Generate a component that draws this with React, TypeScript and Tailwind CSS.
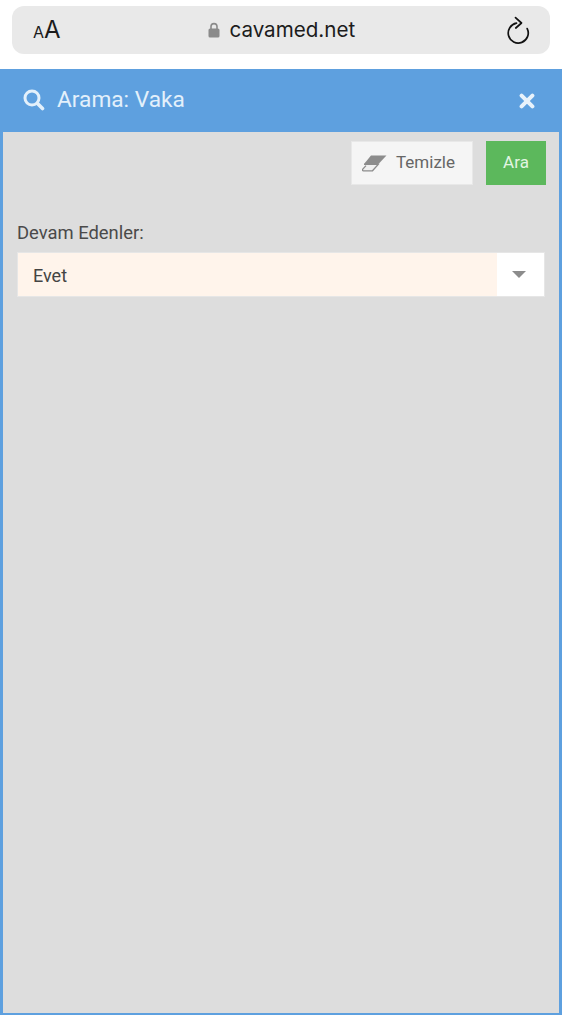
const SearchIcon = () => (
  <svg width="22" height="22" viewBox="0 0 22 22" fill="none" stroke="#e3f0fb" strokeWidth="3" strokeLinecap="round">
    <circle cx="9" cy="9" r="7" />
    <path d="M14.5 14.5l5 5" strokeWidth="3.6" />
  </svg>
);

const CloseIcon = () => (
  <svg width="16" height="16" viewBox="0 0 16 16" stroke="#e8f2fb" strokeWidth="4" strokeLinecap="round">
    <path d="M2.6 2.6l10.8 10.8M13.4 2.6L2.6 13.4" />
  </svg>
);

const EraserIcon = () => (
  <svg width="25" height="17" viewBox="0 0 25 17">
    <path d="M9 0.5H24.5L16.5 9H2Z" fill="#8c8c8c" />
    <path d="M2 9.4H16.2L10.5 15.8H1.4C0.5 15.8 0.2 15.2 0.6 14.4L4 10.6" fill="#f0f0f0" stroke="#8c8c8c" strokeWidth="1.3" />
  </svg>
);

const ReloadIcon = () => (
  <svg width="24" height="28" viewBox="0 0 24 28" fill="none" stroke="#111111" strokeWidth="1.7" strokeLinecap="round" strokeLinejoin="round">
    <path d="M10.5 7.2A10 10 0 1 0 21.2 12.6" />
    <path d="M9.5 1.6L15.5 7L9.8 12" />
  </svg>
);

const LockIcon = () => (
  <svg width="12" height="16" viewBox="0 0 12 16">
    <path d="M3 7V4.6a3 3 0 0 1 6 0V7" fill="none" stroke="#8a8a8a" strokeWidth="1.6" />
    <rect x="0.5" y="6.5" width="11" height="9" rx="1.6" fill="#8a8a8a" />
  </svg>
);

const App = () => {
  return (
    <div className="flex h-[1024px] w-[562px] flex-col overflow-hidden bg-white font-['Roboto',sans-serif]">
      <div className="px-3 pt-1.5">
        <div className="flex h-12 w-[538px] items-center justify-between rounded-xl bg-[#e9e9e9] pl-[21px] pr-5 font-['Inter',sans-serif] text-[#1c1c1c]">
          <div className="flex items-baseline">
            <span className="text-[16px] leading-none">A</span>
            <span className="text-[24px] leading-none">A</span>
          </div>
          <div className="mr-[3px] flex items-center gap-[9px]">
            <LockIcon />
            <span className="text-[20.6px] leading-none">cavamed.net</span>
          </div>
          <ReloadIcon />
        </div>
      </div>

      <div className="mt-[15px] flex h-[946px] flex-col border-x-[3px] border-b-2 border-[#5ea0df] bg-[#dddddd]">
        <div className="-mx-[3px] flex h-[63px] shrink-0 items-center justify-between bg-[#5ea0df] pl-[23px] pr-[27px]">
          <div className="flex items-center gap-[12px]">
            <SearchIcon />
            <span className="text-[22.7px] leading-none text-[#e3f0fb]">Arama: Vaka</span>
          </div>
          <CloseIcon />
        </div>

        <div className="flex justify-end gap-[14px] pr-[13px] pt-[10px]">
          <button className="flex h-[42px] w-[120px] items-center gap-[9px] bg-[#f5f5f5] pl-[10px] text-[17px] text-[#666666] shadow-[0_0_0_1px_#e8e8e8]">
            <EraserIcon />
            Temizle
          </button>
          <button className="-mt-px h-[44px] w-[60px] bg-[#5cb85c] text-[17px] text-[#e2f5e2]">Ara</button>
        </div>

        <div className="px-[14px] pt-[36px]">
          <div className="text-[18.4px] leading-[24px] text-[#4a4a4a]">Devam Edenler:</div>
          <div className="ml-px mt-[8px] flex h-[43px] w-[526px] bg-white shadow-[0_0_0_1px_#e6e6e6]">
            <div className="flex flex-1 items-center bg-[#fff4eb] pl-[15px] pt-[2px] text-[18px] text-[#444444]">Evet</div>
            <div className="flex w-[47px] items-center justify-center pr-[4px]">
              <div className="h-0 w-0 border-x-[7px] border-t-[7px] border-x-transparent border-t-[#8c8c8c]" />
            </div>
          </div>
        </div>
      </div>
    </div>
  );
};

export default App;
